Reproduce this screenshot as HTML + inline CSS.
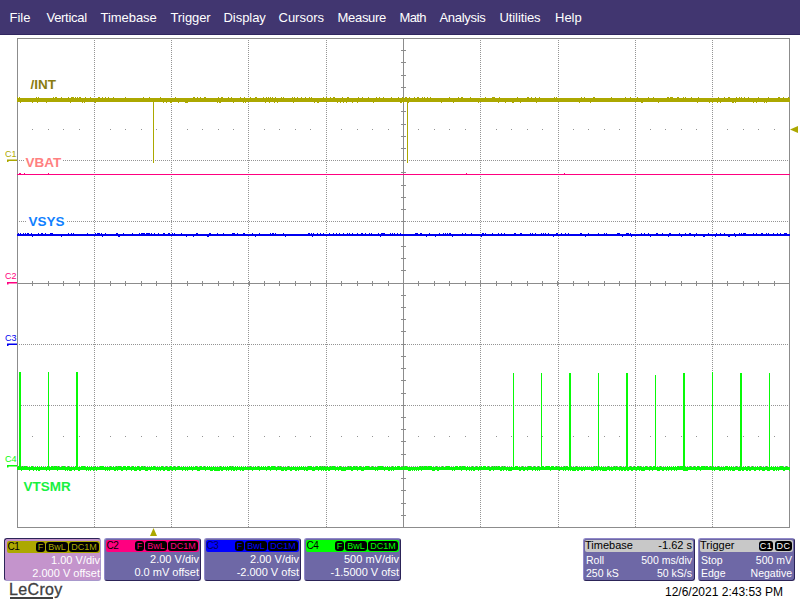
<!DOCTYPE html>
<html><head><meta charset="utf-8"><title>LeCroy</title>
<style>
html,body{margin:0;padding:0;background:#fff;}
body{width:800px;height:600px;position:relative;overflow:hidden;font-family:"Liberation Sans",Arial,sans-serif;}
.menu{position:absolute;left:0;top:0;width:800px;height:34px;border-bottom:1px solid #30265f;background:#413670;color:#fff;font-size:13px;}
.menu span{position:absolute;top:10px;line-height:16px;white-space:nowrap;}
.scope{position:absolute;left:0;top:0;}
.lbl{position:absolute;font-weight:bold;font-size:13.5px;line-height:14px;background:#fff;white-space:nowrap;padding:0 2px;}
.ch,.tb{position:absolute;top:538px;height:41px;border:1px solid #2c2458;border-color:#9088c8 #2c2458 #2c2458 #9088c8;border-radius:3px;color:#fff;font-size:11px;box-sizing:content-box;}
.ch{width:95px;}
.tb{background:#6e68a6;}
.hd{position:absolute;left:1px;top:1px;right:1px;height:12px;border-radius:2px;}
.ch.sel{border-color:#2c2458 #a898cc #a898cc #2c2458;}
.ch.sel .hd{left:2px;top:2px;right:0px;}
.ch.sel .l1,.ch.sel .l2{margin-top:1px;right:0px}
.ch .nm{position:absolute;left:0.5px;letter-spacing:-0.4px;top:0px;font-size:10px;line-height:12px;}
.bd{position:absolute;top:1px;height:10px;background:#000;border-radius:3px;font-size:9px;line-height:10px;text-align:center;}
.ch .l1,.ch .l2{position:absolute;right:1px;white-space:nowrap;line-height:13px;}
.ch .l1{top:14px} .ch .l2{top:27px}
.tb .hd{background:#c8c8c8;color:#000;}
.tb span{position:absolute;white-space:nowrap;line-height:13px;font-size:10.5px;}
.tb .hd span{font-size:11px;}
.tb .hd span{top:-1px;}
.tb .hd span.bd{top:1px;color:#fff;letter-spacing:0.5px;line-height:10px;font-size:9px;}
.logo{position:absolute;left:9px;top:581px;font-size:16px;line-height:18px;color:#404040;letter-spacing:0.35px;-webkit-text-stroke:0.3px #404040;}
.logo i{position:absolute;left:1px;top:16px;width:43px;height:2px;background:#404040;}
.ts{position:absolute;left:665px;top:585px;font-size:12px;line-height:14px;color:#000;white-space:nowrap;}
</style></head><body>
<div class="menu"><span style="left:9.5px;letter-spacing:0px">File</span><span style="left:46.5px;letter-spacing:-0.3px">Vertical</span><span style="left:100.5px;letter-spacing:-0.05px">Timebase</span><span style="left:170.5px;letter-spacing:-0.1px">Trigger</span><span style="left:223.5px;letter-spacing:-0.05px">Display</span><span style="left:278.5px;letter-spacing:0px">Cursors</span><span style="left:337.5px;letter-spacing:-0.3px">Measure</span><span style="left:399.5px;letter-spacing:-0.6px">Math</span><span style="left:439.5px;letter-spacing:-0.3px">Analysis</span><span style="left:499.5px;letter-spacing:-0.1px">Utilities</span><span style="left:555px;letter-spacing:0px">Help</span></div>
<svg class="scope" width="800" height="600" viewBox="0 0 800 600" shape-rendering="crispEdges">
<line x1="94.5" y1="40.0" x2="94.5" y2="527.0" stroke="#949494" stroke-width="1" stroke-dasharray="1 1"/>
<line x1="171.5" y1="40.0" x2="171.5" y2="527.0" stroke="#949494" stroke-width="1" stroke-dasharray="1 1"/>
<line x1="248.5" y1="40.0" x2="248.5" y2="527.0" stroke="#949494" stroke-width="1" stroke-dasharray="1 1"/>
<line x1="326.5" y1="40.0" x2="326.5" y2="527.0" stroke="#949494" stroke-width="1" stroke-dasharray="1 1"/>
<line x1="480.5" y1="40.0" x2="480.5" y2="527.0" stroke="#949494" stroke-width="1" stroke-dasharray="1 1"/>
<line x1="558.5" y1="40.0" x2="558.5" y2="527.0" stroke="#949494" stroke-width="1" stroke-dasharray="1 1"/>
<line x1="635.5" y1="40.0" x2="635.5" y2="527.0" stroke="#949494" stroke-width="1" stroke-dasharray="1 1"/>
<line x1="712.5" y1="40.0" x2="712.5" y2="527.0" stroke="#949494" stroke-width="1" stroke-dasharray="1 1"/>
<line x1="19.0" y1="99.5" x2="789.0" y2="99.5" stroke="#949494" stroke-width="1" stroke-dasharray="1 1"/>
<line x1="19.0" y1="160.5" x2="789.0" y2="160.5" stroke="#949494" stroke-width="1" stroke-dasharray="1 1"/>
<line x1="19.0" y1="221.5" x2="789.0" y2="221.5" stroke="#949494" stroke-width="1" stroke-dasharray="1 1"/>
<line x1="19.0" y1="344.5" x2="789.0" y2="344.5" stroke="#949494" stroke-width="1" stroke-dasharray="1 1"/>
<line x1="19.0" y1="405.5" x2="789.0" y2="405.5" stroke="#949494" stroke-width="1" stroke-dasharray="1 1"/>
<line x1="19.0" y1="466.5" x2="789.0" y2="466.5" stroke="#949494" stroke-width="1" stroke-dasharray="1 1"/>
<rect x="32" y="129" width="1" height="1" fill="#949494"/>
<rect x="48" y="129" width="1" height="1" fill="#949494"/>
<rect x="63" y="129" width="1" height="1" fill="#949494"/>
<rect x="79" y="129" width="1" height="1" fill="#949494"/>
<rect x="110" y="129" width="1" height="1" fill="#949494"/>
<rect x="125" y="129" width="1" height="1" fill="#949494"/>
<rect x="141" y="129" width="1" height="1" fill="#949494"/>
<rect x="156" y="129" width="1" height="1" fill="#949494"/>
<rect x="187" y="129" width="1" height="1" fill="#949494"/>
<rect x="202" y="129" width="1" height="1" fill="#949494"/>
<rect x="218" y="129" width="1" height="1" fill="#949494"/>
<rect x="233" y="129" width="1" height="1" fill="#949494"/>
<rect x="264" y="129" width="1" height="1" fill="#949494"/>
<rect x="279" y="129" width="1" height="1" fill="#949494"/>
<rect x="295" y="129" width="1" height="1" fill="#949494"/>
<rect x="310" y="129" width="1" height="1" fill="#949494"/>
<rect x="341" y="129" width="1" height="1" fill="#949494"/>
<rect x="357" y="129" width="1" height="1" fill="#949494"/>
<rect x="372" y="129" width="1" height="1" fill="#949494"/>
<rect x="388" y="129" width="1" height="1" fill="#949494"/>
<rect x="418" y="129" width="1" height="1" fill="#949494"/>
<rect x="434" y="129" width="1" height="1" fill="#949494"/>
<rect x="449" y="129" width="1" height="1" fill="#949494"/>
<rect x="465" y="129" width="1" height="1" fill="#949494"/>
<rect x="496" y="129" width="1" height="1" fill="#949494"/>
<rect x="511" y="129" width="1" height="1" fill="#949494"/>
<rect x="527" y="129" width="1" height="1" fill="#949494"/>
<rect x="542" y="129" width="1" height="1" fill="#949494"/>
<rect x="573" y="129" width="1" height="1" fill="#949494"/>
<rect x="588" y="129" width="1" height="1" fill="#949494"/>
<rect x="604" y="129" width="1" height="1" fill="#949494"/>
<rect x="619" y="129" width="1" height="1" fill="#949494"/>
<rect x="650" y="129" width="1" height="1" fill="#949494"/>
<rect x="665" y="129" width="1" height="1" fill="#949494"/>
<rect x="681" y="129" width="1" height="1" fill="#949494"/>
<rect x="696" y="129" width="1" height="1" fill="#949494"/>
<rect x="727" y="129" width="1" height="1" fill="#949494"/>
<rect x="743" y="129" width="1" height="1" fill="#949494"/>
<rect x="758" y="129" width="1" height="1" fill="#949494"/>
<rect x="774" y="129" width="1" height="1" fill="#949494"/>
<rect x="32" y="436" width="1" height="1" fill="#949494"/>
<rect x="48" y="436" width="1" height="1" fill="#949494"/>
<rect x="63" y="436" width="1" height="1" fill="#949494"/>
<rect x="79" y="436" width="1" height="1" fill="#949494"/>
<rect x="110" y="436" width="1" height="1" fill="#949494"/>
<rect x="125" y="436" width="1" height="1" fill="#949494"/>
<rect x="141" y="436" width="1" height="1" fill="#949494"/>
<rect x="156" y="436" width="1" height="1" fill="#949494"/>
<rect x="187" y="436" width="1" height="1" fill="#949494"/>
<rect x="202" y="436" width="1" height="1" fill="#949494"/>
<rect x="218" y="436" width="1" height="1" fill="#949494"/>
<rect x="233" y="436" width="1" height="1" fill="#949494"/>
<rect x="264" y="436" width="1" height="1" fill="#949494"/>
<rect x="279" y="436" width="1" height="1" fill="#949494"/>
<rect x="295" y="436" width="1" height="1" fill="#949494"/>
<rect x="310" y="436" width="1" height="1" fill="#949494"/>
<rect x="341" y="436" width="1" height="1" fill="#949494"/>
<rect x="357" y="436" width="1" height="1" fill="#949494"/>
<rect x="372" y="436" width="1" height="1" fill="#949494"/>
<rect x="388" y="436" width="1" height="1" fill="#949494"/>
<rect x="418" y="436" width="1" height="1" fill="#949494"/>
<rect x="434" y="436" width="1" height="1" fill="#949494"/>
<rect x="449" y="436" width="1" height="1" fill="#949494"/>
<rect x="465" y="436" width="1" height="1" fill="#949494"/>
<rect x="496" y="436" width="1" height="1" fill="#949494"/>
<rect x="511" y="436" width="1" height="1" fill="#949494"/>
<rect x="527" y="436" width="1" height="1" fill="#949494"/>
<rect x="542" y="436" width="1" height="1" fill="#949494"/>
<rect x="573" y="436" width="1" height="1" fill="#949494"/>
<rect x="588" y="436" width="1" height="1" fill="#949494"/>
<rect x="604" y="436" width="1" height="1" fill="#949494"/>
<rect x="619" y="436" width="1" height="1" fill="#949494"/>
<rect x="650" y="436" width="1" height="1" fill="#949494"/>
<rect x="665" y="436" width="1" height="1" fill="#949494"/>
<rect x="681" y="436" width="1" height="1" fill="#949494"/>
<rect x="696" y="436" width="1" height="1" fill="#949494"/>
<rect x="727" y="436" width="1" height="1" fill="#949494"/>
<rect x="743" y="436" width="1" height="1" fill="#949494"/>
<rect x="758" y="436" width="1" height="1" fill="#949494"/>
<rect x="774" y="436" width="1" height="1" fill="#949494"/>
<line x1="17.5" y1="283.5" x2="789.5" y2="283.5" stroke="#8c8c8c" stroke-width="1"/>
<line x1="403.5" y1="38.5" x2="403.5" y2="527.5" stroke="#8c8c8c" stroke-width="1"/>
<line x1="32.5" y1="281" x2="32.5" y2="286" stroke="#8c8c8c" stroke-width="1"/>
<line x1="48.5" y1="281" x2="48.5" y2="286" stroke="#8c8c8c" stroke-width="1"/>
<line x1="63.5" y1="281" x2="63.5" y2="286" stroke="#8c8c8c" stroke-width="1"/>
<line x1="79.5" y1="281" x2="79.5" y2="286" stroke="#8c8c8c" stroke-width="1"/>
<line x1="94.5" y1="281" x2="94.5" y2="286" stroke="#8c8c8c" stroke-width="1"/>
<line x1="110.5" y1="281" x2="110.5" y2="286" stroke="#8c8c8c" stroke-width="1"/>
<line x1="125.5" y1="281" x2="125.5" y2="286" stroke="#8c8c8c" stroke-width="1"/>
<line x1="141.5" y1="281" x2="141.5" y2="286" stroke="#8c8c8c" stroke-width="1"/>
<line x1="156.5" y1="281" x2="156.5" y2="286" stroke="#8c8c8c" stroke-width="1"/>
<line x1="171.5" y1="281" x2="171.5" y2="286" stroke="#8c8c8c" stroke-width="1"/>
<line x1="187.5" y1="281" x2="187.5" y2="286" stroke="#8c8c8c" stroke-width="1"/>
<line x1="202.5" y1="281" x2="202.5" y2="286" stroke="#8c8c8c" stroke-width="1"/>
<line x1="218.5" y1="281" x2="218.5" y2="286" stroke="#8c8c8c" stroke-width="1"/>
<line x1="233.5" y1="281" x2="233.5" y2="286" stroke="#8c8c8c" stroke-width="1"/>
<line x1="249.5" y1="281" x2="249.5" y2="286" stroke="#8c8c8c" stroke-width="1"/>
<line x1="264.5" y1="281" x2="264.5" y2="286" stroke="#8c8c8c" stroke-width="1"/>
<line x1="279.5" y1="281" x2="279.5" y2="286" stroke="#8c8c8c" stroke-width="1"/>
<line x1="295.5" y1="281" x2="295.5" y2="286" stroke="#8c8c8c" stroke-width="1"/>
<line x1="310.5" y1="281" x2="310.5" y2="286" stroke="#8c8c8c" stroke-width="1"/>
<line x1="326.5" y1="281" x2="326.5" y2="286" stroke="#8c8c8c" stroke-width="1"/>
<line x1="341.5" y1="281" x2="341.5" y2="286" stroke="#8c8c8c" stroke-width="1"/>
<line x1="357.5" y1="281" x2="357.5" y2="286" stroke="#8c8c8c" stroke-width="1"/>
<line x1="372.5" y1="281" x2="372.5" y2="286" stroke="#8c8c8c" stroke-width="1"/>
<line x1="388.5" y1="281" x2="388.5" y2="286" stroke="#8c8c8c" stroke-width="1"/>
<line x1="403.5" y1="281" x2="403.5" y2="286" stroke="#8c8c8c" stroke-width="1"/>
<line x1="418.5" y1="281" x2="418.5" y2="286" stroke="#8c8c8c" stroke-width="1"/>
<line x1="434.5" y1="281" x2="434.5" y2="286" stroke="#8c8c8c" stroke-width="1"/>
<line x1="449.5" y1="281" x2="449.5" y2="286" stroke="#8c8c8c" stroke-width="1"/>
<line x1="465.5" y1="281" x2="465.5" y2="286" stroke="#8c8c8c" stroke-width="1"/>
<line x1="480.5" y1="281" x2="480.5" y2="286" stroke="#8c8c8c" stroke-width="1"/>
<line x1="496.5" y1="281" x2="496.5" y2="286" stroke="#8c8c8c" stroke-width="1"/>
<line x1="511.5" y1="281" x2="511.5" y2="286" stroke="#8c8c8c" stroke-width="1"/>
<line x1="527.5" y1="281" x2="527.5" y2="286" stroke="#8c8c8c" stroke-width="1"/>
<line x1="542.5" y1="281" x2="542.5" y2="286" stroke="#8c8c8c" stroke-width="1"/>
<line x1="557.5" y1="281" x2="557.5" y2="286" stroke="#8c8c8c" stroke-width="1"/>
<line x1="573.5" y1="281" x2="573.5" y2="286" stroke="#8c8c8c" stroke-width="1"/>
<line x1="588.5" y1="281" x2="588.5" y2="286" stroke="#8c8c8c" stroke-width="1"/>
<line x1="604.5" y1="281" x2="604.5" y2="286" stroke="#8c8c8c" stroke-width="1"/>
<line x1="619.5" y1="281" x2="619.5" y2="286" stroke="#8c8c8c" stroke-width="1"/>
<line x1="635.5" y1="281" x2="635.5" y2="286" stroke="#8c8c8c" stroke-width="1"/>
<line x1="650.5" y1="281" x2="650.5" y2="286" stroke="#8c8c8c" stroke-width="1"/>
<line x1="665.5" y1="281" x2="665.5" y2="286" stroke="#8c8c8c" stroke-width="1"/>
<line x1="681.5" y1="281" x2="681.5" y2="286" stroke="#8c8c8c" stroke-width="1"/>
<line x1="696.5" y1="281" x2="696.5" y2="286" stroke="#8c8c8c" stroke-width="1"/>
<line x1="712.5" y1="281" x2="712.5" y2="286" stroke="#8c8c8c" stroke-width="1"/>
<line x1="727.5" y1="281" x2="727.5" y2="286" stroke="#8c8c8c" stroke-width="1"/>
<line x1="743.5" y1="281" x2="743.5" y2="286" stroke="#8c8c8c" stroke-width="1"/>
<line x1="758.5" y1="281" x2="758.5" y2="286" stroke="#8c8c8c" stroke-width="1"/>
<line x1="774.5" y1="281" x2="774.5" y2="286" stroke="#8c8c8c" stroke-width="1"/>
<line x1="401" y1="50.5" x2="406" y2="50.5" stroke="#8c8c8c" stroke-width="1"/>
<line x1="401" y1="62.5" x2="406" y2="62.5" stroke="#8c8c8c" stroke-width="1"/>
<line x1="401" y1="75.5" x2="406" y2="75.5" stroke="#8c8c8c" stroke-width="1"/>
<line x1="401" y1="87.5" x2="406" y2="87.5" stroke="#8c8c8c" stroke-width="1"/>
<line x1="401" y1="99.5" x2="406" y2="99.5" stroke="#8c8c8c" stroke-width="1"/>
<line x1="401" y1="111.5" x2="406" y2="111.5" stroke="#8c8c8c" stroke-width="1"/>
<line x1="401" y1="124.5" x2="406" y2="124.5" stroke="#8c8c8c" stroke-width="1"/>
<line x1="401" y1="136.5" x2="406" y2="136.5" stroke="#8c8c8c" stroke-width="1"/>
<line x1="401" y1="148.5" x2="406" y2="148.5" stroke="#8c8c8c" stroke-width="1"/>
<line x1="401" y1="160.5" x2="406" y2="160.5" stroke="#8c8c8c" stroke-width="1"/>
<line x1="401" y1="172.5" x2="406" y2="172.5" stroke="#8c8c8c" stroke-width="1"/>
<line x1="401" y1="185.5" x2="406" y2="185.5" stroke="#8c8c8c" stroke-width="1"/>
<line x1="401" y1="197.5" x2="406" y2="197.5" stroke="#8c8c8c" stroke-width="1"/>
<line x1="401" y1="209.5" x2="406" y2="209.5" stroke="#8c8c8c" stroke-width="1"/>
<line x1="401" y1="221.5" x2="406" y2="221.5" stroke="#8c8c8c" stroke-width="1"/>
<line x1="401" y1="234.5" x2="406" y2="234.5" stroke="#8c8c8c" stroke-width="1"/>
<line x1="401" y1="246.5" x2="406" y2="246.5" stroke="#8c8c8c" stroke-width="1"/>
<line x1="401" y1="258.5" x2="406" y2="258.5" stroke="#8c8c8c" stroke-width="1"/>
<line x1="401" y1="270.5" x2="406" y2="270.5" stroke="#8c8c8c" stroke-width="1"/>
<line x1="401" y1="283.5" x2="406" y2="283.5" stroke="#8c8c8c" stroke-width="1"/>
<line x1="401" y1="295.5" x2="406" y2="295.5" stroke="#8c8c8c" stroke-width="1"/>
<line x1="401" y1="307.5" x2="406" y2="307.5" stroke="#8c8c8c" stroke-width="1"/>
<line x1="401" y1="319.5" x2="406" y2="319.5" stroke="#8c8c8c" stroke-width="1"/>
<line x1="401" y1="331.5" x2="406" y2="331.5" stroke="#8c8c8c" stroke-width="1"/>
<line x1="401" y1="344.5" x2="406" y2="344.5" stroke="#8c8c8c" stroke-width="1"/>
<line x1="401" y1="356.5" x2="406" y2="356.5" stroke="#8c8c8c" stroke-width="1"/>
<line x1="401" y1="368.5" x2="406" y2="368.5" stroke="#8c8c8c" stroke-width="1"/>
<line x1="401" y1="380.5" x2="406" y2="380.5" stroke="#8c8c8c" stroke-width="1"/>
<line x1="401" y1="393.5" x2="406" y2="393.5" stroke="#8c8c8c" stroke-width="1"/>
<line x1="401" y1="405.5" x2="406" y2="405.5" stroke="#8c8c8c" stroke-width="1"/>
<line x1="401" y1="417.5" x2="406" y2="417.5" stroke="#8c8c8c" stroke-width="1"/>
<line x1="401" y1="429.5" x2="406" y2="429.5" stroke="#8c8c8c" stroke-width="1"/>
<line x1="401" y1="441.5" x2="406" y2="441.5" stroke="#8c8c8c" stroke-width="1"/>
<line x1="401" y1="454.5" x2="406" y2="454.5" stroke="#8c8c8c" stroke-width="1"/>
<line x1="401" y1="466.5" x2="406" y2="466.5" stroke="#8c8c8c" stroke-width="1"/>
<line x1="401" y1="478.5" x2="406" y2="478.5" stroke="#8c8c8c" stroke-width="1"/>
<line x1="401" y1="490.5" x2="406" y2="490.5" stroke="#8c8c8c" stroke-width="1"/>
<line x1="401" y1="503.5" x2="406" y2="503.5" stroke="#8c8c8c" stroke-width="1"/>
<line x1="401" y1="515.5" x2="406" y2="515.5" stroke="#8c8c8c" stroke-width="1"/>
<rect x="17.5" y="38.5" width="772.0" height="489.0" fill="none" stroke="#8c8c8c" stroke-width="1"/>
<rect x="17" y="174" width="773" height="1" fill="#ff0080"/>
<path d="M19 173h1v1h-1zM20 173h1v1h-1zM24 173h1v1h-1zM48 173h1v1h-1zM466 173h1v1h-1zM564 173h1v1h-1z" fill="#ff0080"/>
<rect x="17" y="234" width="773" height="2" fill="#0000f0"/>
<path d="M18 233h1v1h-1zM20 233h1v1h-1zM23 233h1v1h-1zM25 233h1v1h-1zM27 233h1v1h-1zM28 233h1v1h-1zM31 233h1v1h-1zM32 236h1v1h-1zM38 233h1v1h-1zM41 233h1v1h-1zM42 233h1v1h-1zM45 233h1v1h-1zM50 233h1v1h-1zM51 233h1v1h-1zM52 233h1v1h-1zM61 236h1v1h-1zM68 233h1v1h-1zM71 233h1v1h-1zM73 233h1v1h-1zM87 233h1v1h-1zM95 233h1v1h-1zM97 233h1v1h-1zM98 233h1v1h-1zM99 233h1v1h-1zM101 233h1v1h-1zM102 236h1v1h-1zM105 233h1v1h-1zM116 233h1v1h-1zM117 233h1v1h-1zM118 236h1v1h-1zM119 236h1v1h-1zM123 233h1v1h-1zM132 233h1v1h-1zM139 233h1v1h-1zM141 233h1v1h-1zM142 233h1v1h-1zM143 233h1v1h-1zM144 233h1v1h-1zM146 233h1v1h-1zM147 233h1v1h-1zM148 233h1v1h-1zM149 233h1v1h-1zM151 233h1v1h-1zM154 233h1v1h-1zM158 233h1v1h-1zM163 233h1v1h-1zM164 233h1v1h-1zM168 233h1v1h-1zM169 233h1v1h-1zM172 233h1v1h-1zM174 233h1v1h-1zM181 233h1v1h-1zM186 236h1v1h-1zM193 236h1v1h-1zM196 233h1v1h-1zM197 233h1v1h-1zM207 236h1v1h-1zM208 236h1v1h-1zM209 233h1v1h-1zM210 233h1v1h-1zM217 233h1v1h-1zM223 233h1v1h-1zM232 233h1v1h-1zM233 233h1v1h-1zM234 233h1v1h-1zM237 233h1v1h-1zM243 233h1v1h-1zM244 233h1v1h-1zM252 233h1v1h-1zM255 236h1v1h-1zM259 233h1v1h-1zM270 233h1v1h-1zM272 233h1v1h-1zM273 233h1v1h-1zM275 233h1v1h-1zM283 233h1v1h-1zM285 236h1v1h-1zM308 233h1v1h-1zM309 233h1v1h-1zM311 233h1v1h-1zM312 236h1v1h-1zM313 233h1v1h-1zM317 233h1v1h-1zM320 233h1v1h-1zM323 233h1v1h-1zM329 233h1v1h-1zM333 233h1v1h-1zM336 233h1v1h-1zM339 233h1v1h-1zM343 233h1v1h-1zM347 233h1v1h-1zM349 233h1v1h-1zM352 233h1v1h-1zM357 233h1v1h-1zM361 233h1v1h-1zM362 233h1v1h-1zM365 233h1v1h-1zM369 233h1v1h-1zM371 233h1v1h-1zM378 233h1v1h-1zM380 236h1v1h-1zM381 233h1v1h-1zM382 233h1v1h-1zM383 233h1v1h-1zM384 233h1v1h-1zM390 233h1v1h-1zM392 233h1v1h-1zM394 233h1v1h-1zM397 233h1v1h-1zM400 233h1v1h-1zM415 233h1v1h-1zM416 233h1v1h-1zM417 233h1v1h-1zM420 233h1v1h-1zM421 233h1v1h-1zM426 236h1v1h-1zM429 233h1v1h-1zM435 236h1v1h-1zM439 233h1v1h-1zM443 233h1v1h-1zM445 233h1v1h-1zM447 233h1v1h-1zM449 233h1v1h-1zM450 233h1v1h-1zM452 236h1v1h-1zM462 233h1v1h-1zM465 233h1v1h-1zM471 233h1v1h-1zM481 236h1v1h-1zM482 233h1v1h-1zM483 233h1v1h-1zM485 233h1v1h-1zM492 233h1v1h-1zM498 233h1v1h-1zM501 233h1v1h-1zM504 233h1v1h-1zM514 233h1v1h-1zM515 233h1v1h-1zM520 233h1v1h-1zM521 233h1v1h-1zM530 233h1v1h-1zM532 233h1v1h-1zM535 233h1v1h-1zM541 233h1v1h-1zM543 233h1v1h-1zM545 233h1v1h-1zM548 233h1v1h-1zM553 236h1v1h-1zM556 233h1v1h-1zM557 233h1v1h-1zM561 233h1v1h-1zM565 233h1v1h-1zM568 233h1v1h-1zM580 233h1v1h-1zM581 233h1v1h-1zM585 236h1v1h-1zM588 233h1v1h-1zM598 233h1v1h-1zM604 233h1v1h-1zM606 233h1v1h-1zM617 233h1v1h-1zM618 233h1v1h-1zM619 233h1v1h-1zM622 236h1v1h-1zM626 233h1v1h-1zM627 233h1v1h-1zM628 233h1v1h-1zM630 233h1v1h-1zM631 236h1v1h-1zM641 233h1v1h-1zM644 233h1v1h-1zM648 233h1v1h-1zM650 236h1v1h-1zM656 233h1v1h-1zM657 233h1v1h-1zM662 233h1v1h-1zM668 236h1v1h-1zM669 233h1v1h-1zM670 233h1v1h-1zM679 233h1v1h-1zM681 236h1v1h-1zM685 233h1v1h-1zM689 233h1v1h-1zM690 233h1v1h-1zM694 236h1v1h-1zM696 233h1v1h-1zM703 236h1v1h-1zM704 236h1v1h-1zM708 233h1v1h-1zM715 236h1v1h-1zM716 233h1v1h-1zM720 233h1v1h-1zM724 233h1v1h-1zM728 236h1v1h-1zM729 236h1v1h-1zM734 233h1v1h-1zM735 236h1v1h-1zM739 233h1v1h-1zM741 233h1v1h-1zM743 233h1v1h-1zM744 233h1v1h-1zM745 233h1v1h-1zM753 233h1v1h-1zM756 233h1v1h-1zM761 233h1v1h-1zM762 233h1v1h-1zM766 233h1v1h-1zM768 233h1v1h-1zM773 233h1v1h-1zM777 233h1v1h-1zM780 233h1v1h-1zM784 233h1v1h-1zM785 233h1v1h-1zM786 233h1v1h-1z" fill="#0000f0"/>
<rect x="17" y="467" width="773" height="3" fill="#08fa08"/>
<path d="M18 466h1v1h-1zM19 466h1v1h-1zM21 470h1v1h-1zM22 466h1v1h-1zM24 466h1v1h-1zM25 466h1v1h-1zM26 466h1v1h-1zM29 470h1v1h-1zM31 466h1v1h-1zM32 466h1v1h-1zM33 470h1v1h-1zM36 470h1v1h-1zM37 466h1v1h-1zM38 470h1v1h-1zM39 470h1v1h-1zM41 466h1v1h-1zM46 470h1v1h-1zM47 466h1v1h-1zM48 466h1v1h-1zM49 470h1v1h-1zM51 466h1v1h-1zM52 466h1v1h-1zM54 466h1v1h-1zM55 466h1v1h-1zM56 466h1v1h-1zM57 470h1v1h-1zM58 466h1v1h-1zM62 466h1v1h-1zM63 466h1v1h-1zM64 466h1v1h-1zM65 470h1v1h-1zM67 470h1v1h-1zM68 466h1v1h-1zM69 470h1v1h-1zM70 470h1v1h-1zM71 470h1v1h-1zM74 470h1v1h-1zM75 466h1v1h-1zM77 466h1v1h-1zM78 470h1v1h-1zM79 470h1v1h-1zM81 466h1v1h-1zM82 466h1v1h-1zM83 466h1v1h-1zM84 466h1v1h-1zM86 470h1v1h-1zM87 466h1v1h-1zM88 470h1v1h-1zM90 470h1v1h-1zM91 466h1v1h-1zM93 470h1v1h-1zM95 466h1v1h-1zM96 470h1v1h-1zM100 466h1v1h-1zM101 466h1v1h-1zM102 466h1v1h-1zM103 466h1v1h-1zM105 470h1v1h-1zM107 470h1v1h-1zM109 470h1v1h-1zM110 466h1v1h-1zM113 466h1v1h-1zM114 470h1v1h-1zM115 470h1v1h-1zM116 466h1v1h-1zM117 470h1v1h-1zM118 466h1v1h-1zM119 466h1v1h-1zM120 466h1v1h-1zM121 470h1v1h-1zM122 470h1v1h-1zM123 466h1v1h-1zM124 466h1v1h-1zM125 466h1v1h-1zM126 470h1v1h-1zM127 466h1v1h-1zM128 466h1v1h-1zM129 466h1v1h-1zM131 470h1v1h-1zM132 466h1v1h-1zM133 466h1v1h-1zM134 470h1v1h-1zM135 470h1v1h-1zM136 470h1v1h-1zM137 466h1v1h-1zM138 466h1v1h-1zM139 470h1v1h-1zM140 470h1v1h-1zM141 466h1v1h-1zM142 466h1v1h-1zM144 466h1v1h-1zM145 470h1v1h-1zM146 470h1v1h-1zM147 470h1v1h-1zM150 470h1v1h-1zM151 466h1v1h-1zM153 466h1v1h-1zM154 466h1v1h-1zM156 470h1v1h-1zM158 470h1v1h-1zM160 470h1v1h-1zM161 466h1v1h-1zM162 466h1v1h-1zM163 470h1v1h-1zM164 470h1v1h-1zM166 466h1v1h-1zM167 470h1v1h-1zM168 470h1v1h-1zM169 470h1v1h-1zM170 466h1v1h-1zM171 466h1v1h-1zM172 470h1v1h-1zM174 466h1v1h-1zM175 470h1v1h-1zM178 466h1v1h-1zM179 466h1v1h-1zM182 470h1v1h-1zM183 466h1v1h-1zM185 470h1v1h-1zM187 470h1v1h-1zM189 466h1v1h-1zM191 466h1v1h-1zM192 470h1v1h-1zM195 466h1v1h-1zM196 466h1v1h-1zM197 470h1v1h-1zM198 470h1v1h-1zM199 470h1v1h-1zM200 466h1v1h-1zM201 466h1v1h-1zM204 466h1v1h-1zM205 470h1v1h-1zM207 466h1v1h-1zM209 466h1v1h-1zM210 470h1v1h-1zM211 470h1v1h-1zM212 470h1v1h-1zM213 466h1v1h-1zM214 470h1v1h-1zM215 470h1v1h-1zM216 470h1v1h-1zM217 470h1v1h-1zM218 470h1v1h-1zM219 470h1v1h-1zM220 466h1v1h-1zM221 470h1v1h-1zM222 470h1v1h-1zM223 466h1v1h-1zM226 470h1v1h-1zM227 466h1v1h-1zM228 470h1v1h-1zM229 466h1v1h-1zM230 466h1v1h-1zM231 470h1v1h-1zM232 466h1v1h-1zM233 470h1v1h-1zM234 470h1v1h-1zM235 466h1v1h-1zM236 470h1v1h-1zM237 466h1v1h-1zM240 470h1v1h-1zM241 466h1v1h-1zM242 470h1v1h-1zM243 470h1v1h-1zM245 466h1v1h-1zM250 466h1v1h-1zM252 470h1v1h-1zM255 466h1v1h-1zM258 466h1v1h-1zM259 470h1v1h-1zM261 466h1v1h-1zM263 466h1v1h-1zM265 466h1v1h-1zM266 470h1v1h-1zM268 466h1v1h-1zM269 466h1v1h-1zM270 470h1v1h-1zM271 466h1v1h-1zM272 466h1v1h-1zM273 466h1v1h-1zM274 466h1v1h-1zM276 470h1v1h-1zM278 466h1v1h-1zM280 466h1v1h-1zM281 470h1v1h-1zM282 470h1v1h-1zM283 470h1v1h-1zM285 470h1v1h-1zM286 470h1v1h-1zM288 466h1v1h-1zM290 470h1v1h-1zM291 470h1v1h-1zM293 466h1v1h-1zM295 470h1v1h-1zM296 470h1v1h-1zM298 470h1v1h-1zM299 466h1v1h-1zM301 466h1v1h-1zM303 466h1v1h-1zM304 470h1v1h-1zM306 470h1v1h-1zM307 470h1v1h-1zM308 466h1v1h-1zM309 466h1v1h-1zM310 466h1v1h-1zM311 466h1v1h-1zM312 470h1v1h-1zM313 470h1v1h-1zM314 470h1v1h-1zM316 466h1v1h-1zM317 466h1v1h-1zM318 470h1v1h-1zM319 466h1v1h-1zM320 466h1v1h-1zM321 470h1v1h-1zM322 466h1v1h-1zM323 470h1v1h-1zM324 466h1v1h-1zM325 470h1v1h-1zM326 470h1v1h-1zM327 466h1v1h-1zM328 470h1v1h-1zM329 470h1v1h-1zM330 466h1v1h-1zM332 466h1v1h-1zM333 466h1v1h-1zM334 466h1v1h-1zM335 470h1v1h-1zM338 470h1v1h-1zM339 466h1v1h-1zM340 466h1v1h-1zM341 470h1v1h-1zM342 470h1v1h-1zM343 470h1v1h-1zM344 470h1v1h-1zM345 470h1v1h-1zM348 466h1v1h-1zM350 466h1v1h-1zM351 470h1v1h-1zM352 470h1v1h-1zM353 466h1v1h-1zM354 466h1v1h-1zM356 466h1v1h-1zM357 470h1v1h-1zM359 466h1v1h-1zM360 466h1v1h-1zM361 470h1v1h-1zM362 470h1v1h-1zM363 470h1v1h-1zM365 466h1v1h-1zM366 466h1v1h-1zM367 466h1v1h-1zM368 466h1v1h-1zM372 466h1v1h-1zM375 470h1v1h-1zM377 470h1v1h-1zM378 466h1v1h-1zM379 466h1v1h-1zM380 466h1v1h-1zM381 466h1v1h-1zM382 466h1v1h-1zM384 470h1v1h-1zM387 466h1v1h-1zM388 470h1v1h-1zM389 470h1v1h-1zM391 470h1v1h-1zM392 466h1v1h-1zM393 470h1v1h-1zM395 466h1v1h-1zM397 466h1v1h-1zM398 466h1v1h-1zM399 466h1v1h-1zM403 466h1v1h-1zM405 466h1v1h-1zM406 466h1v1h-1zM408 470h1v1h-1zM409 470h1v1h-1zM410 470h1v1h-1zM412 470h1v1h-1zM414 470h1v1h-1zM416 470h1v1h-1zM418 470h1v1h-1zM419 466h1v1h-1zM420 466h1v1h-1zM421 470h1v1h-1zM422 466h1v1h-1zM424 466h1v1h-1zM425 466h1v1h-1zM426 466h1v1h-1zM428 466h1v1h-1zM429 466h1v1h-1zM430 466h1v1h-1zM431 466h1v1h-1zM432 470h1v1h-1zM433 470h1v1h-1zM434 470h1v1h-1zM436 466h1v1h-1zM437 470h1v1h-1zM438 470h1v1h-1zM442 466h1v1h-1zM446 466h1v1h-1zM447 466h1v1h-1zM448 466h1v1h-1zM449 466h1v1h-1zM452 470h1v1h-1zM454 470h1v1h-1zM455 466h1v1h-1zM456 466h1v1h-1zM457 466h1v1h-1zM459 466h1v1h-1zM460 466h1v1h-1zM461 470h1v1h-1zM462 466h1v1h-1zM463 466h1v1h-1zM464 466h1v1h-1zM466 470h1v1h-1zM467 466h1v1h-1zM469 470h1v1h-1zM471 470h1v1h-1zM472 466h1v1h-1zM473 470h1v1h-1zM474 470h1v1h-1zM476 466h1v1h-1zM478 470h1v1h-1zM479 466h1v1h-1zM481 466h1v1h-1zM483 466h1v1h-1zM484 466h1v1h-1zM485 466h1v1h-1zM488 466h1v1h-1zM489 470h1v1h-1zM490 470h1v1h-1zM492 466h1v1h-1zM493 470h1v1h-1zM494 466h1v1h-1zM496 466h1v1h-1zM498 466h1v1h-1zM499 466h1v1h-1zM500 470h1v1h-1zM501 470h1v1h-1zM502 466h1v1h-1zM503 470h1v1h-1zM504 466h1v1h-1zM506 470h1v1h-1zM508 470h1v1h-1zM509 470h1v1h-1zM510 470h1v1h-1zM511 470h1v1h-1zM513 466h1v1h-1zM515 466h1v1h-1zM516 466h1v1h-1zM517 466h1v1h-1zM519 470h1v1h-1zM520 470h1v1h-1zM522 466h1v1h-1zM523 470h1v1h-1zM524 470h1v1h-1zM527 470h1v1h-1zM528 466h1v1h-1zM529 466h1v1h-1zM530 466h1v1h-1zM532 470h1v1h-1zM534 466h1v1h-1zM535 470h1v1h-1zM537 470h1v1h-1zM538 466h1v1h-1zM539 470h1v1h-1zM541 466h1v1h-1zM542 466h1v1h-1zM543 466h1v1h-1zM546 466h1v1h-1zM547 466h1v1h-1zM548 466h1v1h-1zM549 466h1v1h-1zM550 470h1v1h-1zM551 466h1v1h-1zM552 466h1v1h-1zM553 466h1v1h-1zM556 466h1v1h-1zM558 466h1v1h-1zM559 470h1v1h-1zM563 470h1v1h-1zM564 466h1v1h-1zM565 470h1v1h-1zM566 466h1v1h-1zM567 466h1v1h-1zM568 470h1v1h-1zM569 466h1v1h-1zM570 470h1v1h-1zM572 470h1v1h-1zM573 470h1v1h-1zM574 470h1v1h-1zM575 470h1v1h-1zM576 466h1v1h-1zM577 470h1v1h-1zM578 470h1v1h-1zM581 470h1v1h-1zM582 470h1v1h-1zM584 470h1v1h-1zM585 466h1v1h-1zM591 470h1v1h-1zM592 470h1v1h-1zM593 470h1v1h-1zM594 466h1v1h-1zM595 470h1v1h-1zM596 466h1v1h-1zM597 470h1v1h-1zM600 470h1v1h-1zM601 466h1v1h-1zM602 470h1v1h-1zM603 470h1v1h-1zM604 470h1v1h-1zM605 470h1v1h-1zM606 470h1v1h-1zM608 466h1v1h-1zM609 470h1v1h-1zM611 470h1v1h-1zM612 470h1v1h-1zM614 466h1v1h-1zM615 470h1v1h-1zM616 466h1v1h-1zM619 470h1v1h-1zM620 466h1v1h-1zM621 470h1v1h-1zM622 470h1v1h-1zM624 470h1v1h-1zM625 470h1v1h-1zM627 470h1v1h-1zM628 470h1v1h-1zM630 466h1v1h-1zM631 470h1v1h-1zM632 470h1v1h-1zM634 466h1v1h-1zM636 470h1v1h-1zM637 466h1v1h-1zM638 466h1v1h-1zM639 470h1v1h-1zM640 466h1v1h-1zM641 470h1v1h-1zM642 470h1v1h-1zM643 470h1v1h-1zM644 470h1v1h-1zM645 466h1v1h-1zM646 466h1v1h-1zM649 470h1v1h-1zM650 466h1v1h-1zM652 470h1v1h-1zM653 466h1v1h-1zM654 466h1v1h-1zM657 470h1v1h-1zM658 470h1v1h-1zM659 470h1v1h-1zM660 466h1v1h-1zM662 470h1v1h-1zM663 470h1v1h-1zM666 470h1v1h-1zM667 466h1v1h-1zM668 470h1v1h-1zM669 466h1v1h-1zM671 470h1v1h-1zM673 466h1v1h-1zM674 470h1v1h-1zM675 466h1v1h-1zM676 470h1v1h-1zM677 466h1v1h-1zM678 466h1v1h-1zM680 466h1v1h-1zM681 466h1v1h-1zM682 466h1v1h-1zM683 470h1v1h-1zM684 470h1v1h-1zM685 470h1v1h-1zM686 470h1v1h-1zM687 470h1v1h-1zM690 466h1v1h-1zM694 466h1v1h-1zM696 470h1v1h-1zM697 466h1v1h-1zM698 466h1v1h-1zM700 470h1v1h-1zM701 466h1v1h-1zM702 466h1v1h-1zM703 466h1v1h-1zM704 466h1v1h-1zM706 466h1v1h-1zM707 466h1v1h-1zM710 466h1v1h-1zM712 470h1v1h-1zM714 470h1v1h-1zM718 466h1v1h-1zM719 470h1v1h-1zM720 470h1v1h-1zM722 470h1v1h-1zM724 470h1v1h-1zM725 466h1v1h-1zM726 466h1v1h-1zM727 466h1v1h-1zM728 470h1v1h-1zM729 466h1v1h-1zM730 470h1v1h-1zM731 466h1v1h-1zM732 470h1v1h-1zM733 470h1v1h-1zM734 470h1v1h-1zM736 466h1v1h-1zM738 470h1v1h-1zM739 470h1v1h-1zM740 470h1v1h-1zM742 470h1v1h-1zM743 470h1v1h-1zM745 466h1v1h-1zM746 470h1v1h-1zM747 470h1v1h-1zM748 466h1v1h-1zM749 470h1v1h-1zM750 470h1v1h-1zM752 466h1v1h-1zM754 470h1v1h-1zM755 470h1v1h-1zM757 466h1v1h-1zM759 470h1v1h-1zM760 466h1v1h-1zM762 470h1v1h-1zM763 470h1v1h-1zM764 470h1v1h-1zM766 466h1v1h-1zM767 470h1v1h-1zM768 470h1v1h-1zM769 470h1v1h-1zM771 466h1v1h-1zM773 470h1v1h-1zM774 470h1v1h-1zM775 466h1v1h-1zM776 470h1v1h-1zM778 470h1v1h-1zM780 466h1v1h-1zM781 466h1v1h-1zM782 466h1v1h-1zM783 470h1v1h-1zM784 470h1v1h-1zM786 466h1v1h-1zM789 470h1v1h-1z" fill="#08fa08"/>
<rect x="19" y="372" width="2" height="96" fill="#08fa08"/>
<rect x="48" y="372" width="1" height="96" fill="#08fa08"/>
<rect x="76" y="372" width="2" height="96" fill="#08fa08"/>
<rect x="513" y="373" width="1" height="95" fill="#08fa08"/>
<rect x="541" y="373" width="1" height="95" fill="#08fa08"/>
<rect x="569" y="373" width="2" height="95" fill="#08fa08"/>
<rect x="598" y="373" width="1" height="95" fill="#08fa08"/>
<rect x="626" y="373" width="2" height="95" fill="#08fa08"/>
<rect x="655" y="375" width="1" height="93" fill="#08fa08"/>
<rect x="683" y="373" width="2" height="95" fill="#08fa08"/>
<rect x="712" y="372" width="1" height="96" fill="#08fa08"/>
<rect x="740" y="373" width="2" height="95" fill="#08fa08"/>
<rect x="769" y="373" width="1" height="95" fill="#08fa08"/>
<rect x="17" y="98" width="773" height="4" fill="#aca800"/>
<path d="M17 97h1v1h-1zM19 97h1v1h-1zM20 102h1v1h-1zM32 102h1v1h-1zM36 97h1v1h-1zM37 102h1v1h-1zM38 97h1v1h-1zM46 102h1v1h-1zM53 97h1v1h-1zM55 97h1v1h-1zM56 97h1v1h-1zM61 97h1v1h-1zM68 97h1v1h-1zM70 102h1v1h-1zM71 97h1v1h-1zM72 97h1v1h-1zM73 97h1v1h-1zM75 97h1v1h-1zM77 97h1v1h-1zM79 97h1v1h-1zM80 97h1v1h-1zM82 102h1v1h-1zM84 102h1v1h-1zM85 97h1v1h-1zM90 97h1v1h-1zM95 102h1v1h-1zM98 97h1v1h-1zM99 97h1v1h-1zM102 97h1v1h-1zM105 97h1v1h-1zM108 97h1v1h-1zM113 97h1v1h-1zM125 97h1v1h-1zM143 97h1v1h-1zM149 97h1v1h-1zM160 97h1v1h-1zM163 102h1v1h-1zM166 102h1v1h-1zM170 102h1v1h-1zM171 102h1v1h-1zM175 97h1v1h-1zM178 102h1v1h-1zM185 102h1v1h-1zM186 102h1v1h-1zM187 102h1v1h-1zM193 97h1v1h-1zM194 97h1v1h-1zM197 97h1v1h-1zM200 97h1v1h-1zM204 97h1v1h-1zM205 97h1v1h-1zM217 102h1v1h-1zM218 97h1v1h-1zM219 102h1v1h-1zM220 102h1v1h-1zM221 97h1v1h-1zM222 97h1v1h-1zM228 97h1v1h-1zM231 97h1v1h-1zM233 102h1v1h-1zM240 97h1v1h-1zM243 102h1v1h-1zM244 97h1v1h-1zM245 102h1v1h-1zM250 97h1v1h-1zM255 97h1v1h-1zM256 97h1v1h-1zM263 97h1v1h-1zM265 102h1v1h-1zM266 97h1v1h-1zM268 97h1v1h-1zM269 102h1v1h-1zM270 97h1v1h-1zM272 97h1v1h-1zM274 102h1v1h-1zM275 97h1v1h-1zM277 102h1v1h-1zM281 97h1v1h-1zM283 97h1v1h-1zM292 97h1v1h-1zM293 102h1v1h-1zM294 97h1v1h-1zM297 97h1v1h-1zM301 97h1v1h-1zM305 97h1v1h-1zM309 97h1v1h-1zM311 97h1v1h-1zM314 102h1v1h-1zM317 102h1v1h-1zM318 102h1v1h-1zM323 97h1v1h-1zM326 97h1v1h-1zM330 97h1v1h-1zM333 97h1v1h-1zM334 97h1v1h-1zM337 102h1v1h-1zM340 102h1v1h-1zM342 97h1v1h-1zM343 102h1v1h-1zM346 102h1v1h-1zM347 97h1v1h-1zM348 97h1v1h-1zM352 102h1v1h-1zM357 102h1v1h-1zM358 97h1v1h-1zM362 97h1v1h-1zM368 97h1v1h-1zM373 102h1v1h-1zM376 97h1v1h-1zM379 97h1v1h-1zM383 97h1v1h-1zM391 97h1v1h-1zM398 97h1v1h-1zM400 102h1v1h-1zM401 102h1v1h-1zM402 97h1v1h-1zM403 102h1v1h-1zM405 97h1v1h-1zM406 97h1v1h-1zM408 102h1v1h-1zM409 97h1v1h-1zM414 97h1v1h-1zM417 97h1v1h-1zM418 97h1v1h-1zM422 97h1v1h-1zM424 97h1v1h-1zM427 97h1v1h-1zM430 97h1v1h-1zM441 102h1v1h-1zM449 97h1v1h-1zM453 102h1v1h-1zM458 97h1v1h-1zM461 97h1v1h-1zM462 97h1v1h-1zM470 97h1v1h-1zM478 102h1v1h-1zM485 97h1v1h-1zM492 97h1v1h-1zM493 97h1v1h-1zM494 97h1v1h-1zM498 102h1v1h-1zM499 97h1v1h-1zM505 102h1v1h-1zM512 102h1v1h-1zM513 102h1v1h-1zM517 97h1v1h-1zM520 102h1v1h-1zM527 97h1v1h-1zM528 97h1v1h-1zM531 97h1v1h-1zM535 97h1v1h-1zM536 102h1v1h-1zM539 97h1v1h-1zM554 97h1v1h-1zM556 97h1v1h-1zM579 102h1v1h-1zM581 97h1v1h-1zM584 97h1v1h-1zM590 102h1v1h-1zM593 97h1v1h-1zM594 97h1v1h-1zM611 97h1v1h-1zM625 97h1v1h-1zM630 97h1v1h-1zM637 97h1v1h-1zM641 102h1v1h-1zM642 102h1v1h-1zM648 97h1v1h-1zM653 97h1v1h-1zM658 102h1v1h-1zM667 97h1v1h-1zM668 97h1v1h-1zM670 97h1v1h-1zM671 97h1v1h-1zM672 97h1v1h-1zM677 97h1v1h-1zM678 97h1v1h-1zM683 97h1v1h-1zM685 97h1v1h-1zM691 97h1v1h-1zM697 102h1v1h-1zM698 97h1v1h-1zM709 102h1v1h-1zM712 102h1v1h-1zM717 102h1v1h-1zM718 97h1v1h-1zM720 102h1v1h-1zM724 97h1v1h-1zM728 97h1v1h-1zM729 97h1v1h-1zM732 102h1v1h-1zM733 102h1v1h-1zM735 102h1v1h-1zM736 97h1v1h-1zM739 97h1v1h-1zM741 97h1v1h-1zM744 97h1v1h-1zM748 97h1v1h-1zM753 102h1v1h-1zM756 102h1v1h-1zM758 97h1v1h-1zM764 102h1v1h-1zM766 102h1v1h-1zM768 97h1v1h-1zM778 97h1v1h-1zM779 97h1v1h-1zM783 97h1v1h-1zM788 97h1v1h-1z" fill="#aca800"/>
<rect x="153" y="100" width="1" height="63" fill="#aca800"/>
<rect x="407" y="100" width="1" height="63" fill="#aca800"/>
<path d="M790 129.5L798 126v7z" fill="#aca800" shape-rendering="auto"/>
<path d="M153.5 528L150 536h7z" fill="#aca800" shape-rendering="auto"/>
<path d="M7 162.0V159.5H17V161.0H8.5V162.0z" fill="#aca800" shape-rendering="auto"/>
<text x="5" y="156.5" font-family="Liberation Sans, Arial, sans-serif" font-size="9" fill="#aca800" shape-rendering="auto">C1</text>
<path d="M7 284.5V282H17V283.5H8.5V284.5z" fill="#ff0080" shape-rendering="auto"/>
<text x="5" y="279" font-family="Liberation Sans, Arial, sans-serif" font-size="9" fill="#ff0080" shape-rendering="auto">C2</text>
<path d="M7 346.0V343.5H17V345.0H8.5V346.0z" fill="#0000f0" shape-rendering="auto"/>
<text x="5" y="340.5" font-family="Liberation Sans, Arial, sans-serif" font-size="9" fill="#0000f0" shape-rendering="auto">C3</text>
<path d="M7 467.5V465H17V466.5H8.5V467.5z" fill="#08fa08" shape-rendering="auto"/>
<text x="5" y="462" font-family="Liberation Sans, Arial, sans-serif" font-size="9" fill="#08fa08" shape-rendering="auto">C4</text>
</svg>
<div class="lbl" style="left:28.5px;top:78px;color:#8a7c10">/INT</div>
<div class="lbl" style="left:23.5px;top:156px;color:#ff8080">VBAT</div>
<div class="lbl" style="left:26.5px;top:215px;color:#1080ff">VSYS</div>
<div class="lbl" style="left:21.5px;top:480px;color:#18f040">VTSMR</div>
<div class="ch sel" style="left:4px;background:#c494cc">
<div class="hd" style="background:#aca800"><span class="nm" style="color:#000">C1</span><span class="bd" style="left:29px;width:9px;color:#aca800">F</span><span class="bd" style="left:39px;width:22px;color:#aca800">BwL</span><span class="bd" style="left:62px;width:30px;color:#aca800">DC1M</span></div>
<div class="l1">1.00 V/div</div><div class="l2">2.000 V offset</div></div>
<div class="ch" style="left:104px;background:#6e68a6">
<div class="hd" style="background:#ff0080"><span class="nm" style="color:#000">C2</span><span class="bd" style="left:29px;width:9px;color:#ff0080">F</span><span class="bd" style="left:39px;width:22px;color:#ff0080">BwL</span><span class="bd" style="left:62px;width:30px;color:#ff0080">DC1M</span></div>
<div class="l1">2.00 V/div</div><div class="l2">0.0 mV offset</div></div>
<div class="ch" style="left:204px;background:#6e68a6">
<div class="hd" style="background:#0000ff"><span class="nm" style="color:#000060">C3</span><span class="bd" style="left:29px;width:9px;color:#0000ff">F</span><span class="bd" style="left:39px;width:22px;color:#0000ff">BwL</span><span class="bd" style="left:62px;width:30px;color:#0000ff">DC1M</span></div>
<div class="l1">2.00 V/div</div><div class="l2">-2.000 V ofst</div></div>
<div class="ch" style="left:304px;background:#6e68a6">
<div class="hd" style="background:#00ff00"><span class="nm" style="color:#000">C4</span><span class="bd" style="left:29px;width:9px;color:#00ff00">F</span><span class="bd" style="left:39px;width:22px;color:#00ff00">BwL</span><span class="bd" style="left:62px;width:30px;color:#00ff00">DC1M</span></div>
<div class="l1">500 mV/div</div><div class="l2">-1.5000 V ofst</div></div>
<div class="tb" style="left:583px;width:110px"><div class="hd"><span style="left:0px">Timebase</span><span style="right:1px">-1.62 s</span></div>
<span style="left:2px;top:15px">Roll</span><span style="right:2px;top:15px">500 ms/div</span>
<span style="left:2px;top:28px">250 kS</span><span style="right:2px;top:28px">50 kS/s</span></div>
<div class="tb" style="left:698px;width:95px"><div class="hd"><span style="left:0px">Trigger</span><span class="bd" style="left:59px;width:14px">C1</span><span class="bd" style="left:75px;width:17px">DC</span></div>
<span style="left:2px;top:15px">Stop</span><span style="right:2px;top:15px">500 mV</span>
<span style="left:2px;top:28px">Edge</span><span style="right:2px;top:28px">Negative</span></div>
<div class="logo">LeCroy<i></i></div>
<div class="ts">12/6/2021 2:43:53 PM</div>
</body></html>
